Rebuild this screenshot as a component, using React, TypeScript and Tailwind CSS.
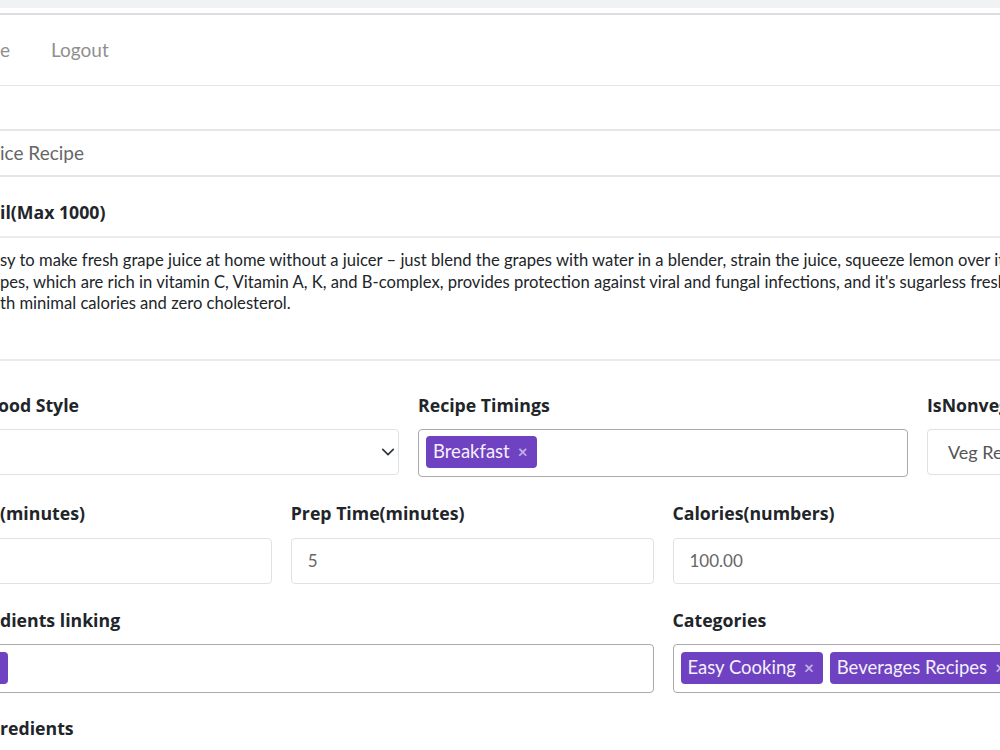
import { ReactNode } from 'react'

// text whose start runs off the left edge: the prefix sits in a box that ends at the view edge
function Cut({ pre, box, children }: { pre: string; box: string; children: ReactNode }) {
  return (
    <span className="inline-flex whitespace-nowrap">
      <span className={`flex shrink-0 justify-end overflow-hidden ${box}`}>{pre}</span>
      <span>{children}</span>
    </span>
  )
}

function Label({ children }: { children: ReactNode }) {
  return (
    <div className="h-[24px] whitespace-nowrap font-['Open_Sans',sans-serif] text-[17.7px] font-bold leading-[24px] text-[#212529]">
      {children}
    </div>
  )
}

function Chip({ label, className = '' }: { label: string; className?: string }) {
  return (
    <span
      className={`inline-flex h-[32px] shrink-0 items-center gap-[8px] whitespace-nowrap rounded-[4px] bg-[#6f42c1] pl-[7px] pr-[9px] text-[18.5px] text-[#f4f0fb] ${className}`}
    >
      {label}
      <span className="text-[17px] font-bold text-[#c5b3e6]">×</span>
    </span>
  )
}

function Chevron() {
  return (
    <svg width="14" height="14" viewBox="0 0 16 16" fill="none" className="shrink-0">
      <path d="m2 5 6 6 6-6" stroke="#343a40" strokeWidth="2" strokeLinecap="round" strokeLinejoin="round" />
    </svg>
  )
}

export default function App() {
  return (
    <div className="h-[750px] w-[1000px] overflow-hidden bg-white font-['Lato',sans-serif]">
      <div className="h-[8px] bg-[#f1f2f4]" />
      <div className="mt-[5px] h-[2px] bg-[#dcdce2]" />
      <nav className="h-[71px] border-b border-[#e6e6e6]">
        <ul className="ml-[-91px] flex h-[70px] items-center gap-[41px] text-[19px] text-[#8f8f8f]">
          <li className="w-[101px] text-right">Home</li>
          <li>Logout</li>
        </ul>
      </nav>

      <div className="ml-[-91px] w-[1508px]">
        <div className="mt-[43px] flex h-[48px] items-center border-2 border-[#e5e5ea] pl-[10px] text-[19px] text-[#666]">
          <Cut pre="Grape Ju" box="w-[79px]">ice Recipe</Cut>
        </div>

        <div className="mt-[23px]">
          <Label>
            <Cut pre="Recipe Deta" box="w-[91px]">il(Max 1000)</Cut>
          </Label>
        </div>
        <div className="mt-[12px] h-[125px] border-2 border-[#ebebeb] pl-[10px] pt-[12px] text-[16.6px] leading-[21.5px] text-[#212529]">
          <div>
            <Cut pre="It's very ea" box="w-[79px]">
              sy to make fresh grape juice at home without a juicer – just blend the grapes with water in a blender, strain the juice, squeeze lemon over it, and enjoy it chilled.
            </Cut>
          </div>
          <div>
            <Cut pre="Green Gra" box="w-[79px]">
              pes, which are rich in vitamin C, Vitamin A, K, and B-complex, provides protection against viral and fungal infections, and it's sugarless fresh juice
            </Cut>
          </div>
          <div>
            <Cut pre="healthy wi" box="w-[79px]">th minimal calories and zero cholesterol.</Cut>
          </div>
        </div>

        <div className="mt-[32px] grid grid-cols-12 gap-x-[19px]">
          <div className="col-span-4">
            <Label>
              <Cut pre="Recipe F" box="w-[89px]">ood Style</Cut>
            </Label>
            <div className="mt-[12px] flex h-[46px] items-center justify-between rounded-[4px] border border-[#dee2e6] pl-[16px] pr-[3px]">
              <span />
              <Chevron />
            </div>
          </div>
          <div className="col-span-4">
            <Label>Recipe Timings</Label>
            <div className="mt-[12px] flex h-[48px] items-start gap-[7px] rounded-[4px] border border-[#aaaaaa] pl-[7px] pt-[6px]">
              <Chip label="Breakfast" />
            </div>
          </div>
          <div className="col-span-4">
            <Label>IsNonveg</Label>
            <div className="mt-[12px] flex h-[46px] items-center rounded-[4px] border border-[#dee2e6] pl-[20px] text-[18px] text-[#555]">
              Veg Recipe
            </div>
          </div>
        </div>

        <div className="mt-[24px] grid grid-cols-12 gap-x-[19px]">
          <div className="col-span-3">
            <Label>
              <Cut pre="Cook Time" box="w-[91px]">(minutes)</Cut>
            </Label>
            <div className="mt-[13px] flex h-[46px] items-center rounded-[4px] border border-[#dee2e6] pl-[16px] text-[17px] text-[#666]">
              10
            </div>
          </div>
          <div className="col-span-3">
            <Label>Prep Time(minutes)</Label>
            <div className="mt-[13px] flex h-[46px] items-center rounded-[4px] border border-[#dee2e6] pl-[16px] text-[17px] text-[#666]">
              5
            </div>
          </div>
          <div className="col-span-6">
            <Label>Calories(numbers)</Label>
            <div className="mt-[13px] flex h-[46px] items-center rounded-[4px] border border-[#dee2e6] pl-[16px] text-[17px] text-[#666]">
              100.00
            </div>
          </div>
        </div>

        <div className="mt-[24px] grid grid-cols-12 gap-x-[19px]">
          <div className="col-span-6">
            <Label>
              <Cut pre="Recipe Ingre" box="w-[91px]">dients linking</Cut>
            </Label>
            <div className="mt-[12px] flex h-[49px] items-start gap-[7px] rounded-[4px] border border-[#aaaaaa] pl-[7px] pt-[7px]">
              <Chip label="Grapes" className="w-[91px] justify-between" />
            </div>
          </div>
          <div className="col-span-6">
            <Label>Categories</Label>
            <div className="mt-[12px] flex h-[49px] items-start gap-[7px] rounded-[4px] border border-[#aaaaaa] pl-[7px] pt-[7px]">
              <Chip label="Easy Cooking" />
              <Chip label="Beverages Recipes" />
            </div>
          </div>
        </div>

        <div className="mt-[23px]">
          <Label>
            <Cut pre="Recipe Ing" box="w-[91px]">redients</Cut>
          </Label>
        </div>
      </div>
    </div>
  )
}
